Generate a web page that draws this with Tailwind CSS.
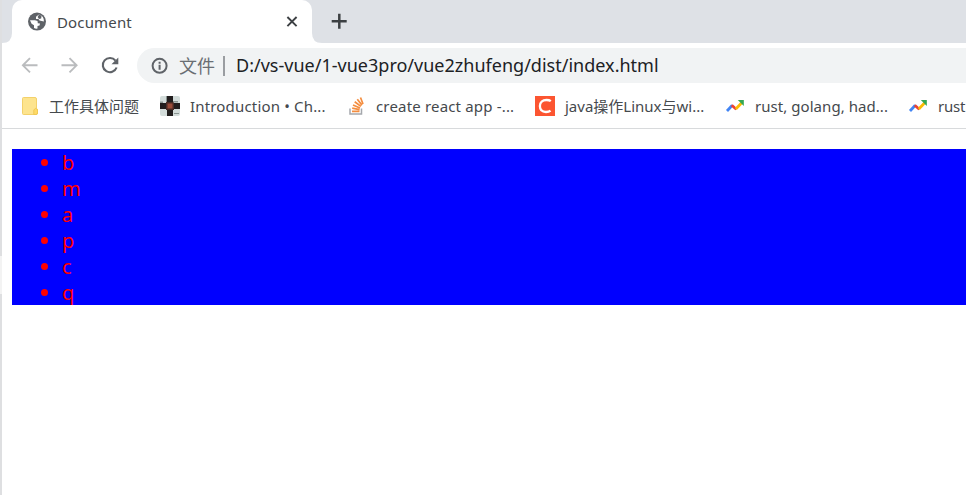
<!DOCTYPE html>
<html lang="zh">
<head>
<meta charset="utf-8">
<title>Document</title>
<script src="https://cdn.jsdelivr.net/npm/@tailwindcss/browser@4"></script>
</head>
<body class="w-[966px] h-[495px] overflow-hidden bg-white flex font-['Noto_Sans','Noto_Sans_CJK_SC',sans-serif]">
<div class="w-[2px] shrink-0 h-full flex flex-col bg-[#dedfe1]"><div class="mt-[256px] h-[38px] bg-[#f3f3f3]"></div></div>
<div class="w-[964px] shrink-0 h-full flex flex-col">
  <header class="h-[43px] bg-[#dee1e6] flex shrink-0">
    <svg class="w-[10px] h-[43px] shrink-0" viewBox="0 0 10 43"><path d="M0 43Q10 43 10 33V43Z" fill="#fff"/></svg>
    <div class="w-[300px] h-[43px] shrink-0 bg-white rounded-t-[10px] flex items-center pl-[15px] pr-[14px]">
      <svg class="w-5 h-5 shrink-0" viewBox="0 0 20 20"><circle cx="10" cy="9.6" r="9" fill="#5f6368"/><path d="M12 2.6L9 4.8V7H11.5L12.5 8.6L16.9 9.6A7 7 0 0 0 12 2.6Z" fill="#fff"/><path d="M3 8.2H8L10.5 9L10.8 11.3L13 11.5L12.5 13.5L10.5 14V16.6Q8.5 17 7 15.9V13.2L4.6 11.8Z" fill="#fff"/><path d="M12 2.6L14.5 3.8L14.2 6.4L12 7L10.6 5Z" fill="#5f6368"/></svg>
      <span class="ml-[10px] text-[15px] leading-5 text-[#45494d] tracking-[0.15px]">Document</span>
      <svg class="ml-auto w-3 h-3" viewBox="0 0 12 12" fill="none" stroke="#3c4043" stroke-width="1.9"><path d="M1.4 1L10.6 10.2M10.6 1L1.4 10.2"/></svg>
    </div>
    <svg class="w-[10px] h-[43px] shrink-0" viewBox="0 0 10 43"><path d="M10 43Q0 43 0 33V43Z" fill="#fff"/></svg>
    <svg class="ml-[9px] mt-[13px] w-4 h-4" viewBox="0 0 16 16" fill="none" stroke="#3c4043" stroke-width="2.5"><path d="M.7 8.3H15.7M8.3 .8V15.8"/></svg>
  </header>
  <nav class="h-[45px] shrink-0 flex items-center">
    <svg class="ml-[18px] w-5 h-5 shrink-0" viewBox="0 0 20 20" fill="none" stroke="#babcbe" stroke-width="1.9"><path d="M17.5 9.3H3M10 2.2L2.9 9.3L10 16.4"/></svg>
    <svg class="ml-5 w-5 h-5 shrink-0" viewBox="0 0 20 20" fill="none" stroke="#babcbe" stroke-width="1.9"><path d="M1.5 9.3H16.5M9.5 2.2L16.6 9.3L9.5 16.4"/></svg>
    <svg class="ml-5 w-5 h-5 shrink-0" viewBox="0 0 20 20"><path d="M15.5 4.7A7.1 7.1 0 1 0 16.6 11.5" fill="none" stroke="#5f6368" stroke-width="2.1"/><path d="M18.3 1.5V8.2H11.5Z" fill="#5f6368"/></svg>
    <div class="ml-[17px] w-[829px] h-[35px] shrink-0 bg-[#f1f3f4] rounded-l-full flex items-center pl-[14px]">
      <svg class="w-[18px] h-[18px] shrink-0" viewBox="0 0 18 18"><circle cx="8.6" cy="8.8" r="7" fill="none" stroke="#5f6368" stroke-width="2"/><path d="M7.6 4.8h2v1.9h-2zM7.6 7.8h2v5h-2z" fill="#5f6368"/></svg>
      <span class="ml-[10px] pb-0.5 text-[18px] leading-6 text-[#6a6e73] font-['Noto_Sans_CJK_SC',sans-serif]">文件</span>
      <div class="ml-[8px] w-[2px] h-5 bg-[#9a9da1]"></div>
      <span class="ml-[11px] pb-0.5 text-[18px] leading-6 text-[#202124] whitespace-nowrap tracking-[0.01px]">D:/vs-vue/1-vue3pro/vue2zhufeng/dist/index.html</span>
    </div>
  </nav>
  <div class="h-[41px] shrink-0 border-b border-[#d8dadc] flex text-[15px] leading-5 text-[#45494d] whitespace-nowrap pt-2">
    <div class="w-[138px] shrink-0 flex pl-[19px]">
      <svg class="w-5 h-5 shrink-0" viewBox="0 0 20 20"><path d="M2.5 1.5H14Q15.5 1.5 15.5 3V12.3L16.5 13.5V17Q16.5 18.5 15 18.5H2.5Q1.5 18.5 1.5 17.5V2.5Q1.5 1.5 2.5 1.5Z" fill="#fde48e" stroke="#f3d16b"/><path d="M12.8 18.5V14L14.5 12.3L16.5 13.5V17Q16.5 18.5 15 18.5Z" fill="#ffda66" stroke="#efc956"/></svg>
      <span class="ml-[8px]">工作具体问题</span>
    </div>
    <div class="w-[187px] shrink-0 flex pl-[20px]">
      <svg class="w-5 h-5 shrink-0" viewBox="0 0 20 20"><rect width="20" height="20" rx="2" fill="#d3dcda"/><path d="M7 0h6v6H7zM0 7h6v6H0zM14 7h6v6h-6zM7 14h6v6H7z" fill="#211d1d"/><path d="M6 6h8v8H6z" fill="#4a2b25"/><path d="M7.5 7.5h5v5h-5z" fill="#984b38"/><path d="M0 5.5h3v1.5H0zM6 0h1v6H6zM13 5h5v1.5h-5zM14 17h5v1h-5z" fill="#899592"/></svg>
      <span class="ml-[10px] tracking-[0.17px]">Introduction • Ch...</span>
    </div>
    <div class="w-[187px] shrink-0 flex pl-[20px]">
      <svg class="w-5 h-5 shrink-0" viewBox="0 0 20 20" fill="none"><path d="M3 12.5V18H14.5V12.5" stroke="#a5a8ad" stroke-width="1.5"/><path d="M5 15.3H12.5M5.2 12.2L12.6 13.6M6 9L13 12M7.7 5.7L13.9 10.4M10.3 3.2L15 9.1M13.5 1.5L16 8" stroke="#f48d3f" stroke-width="1.7"/></svg>
      <span class="ml-[9px] tracking-[0.17px]">create react app -...</span>
    </div>
    <div class="w-[191px] shrink-0 flex pl-[21px]">
      <svg class="w-5 h-5 shrink-0" viewBox="0 0 20 20"><path d="M0 0h20v20H0z" fill="#fc5531"/><path d="M15.8 5.2Q14.3 4 11.5 4C7.5 4 4.9 6.4 4.9 10.1C4.9 13.8 7.2 16 11 16Q14 16 15.5 14.7" fill="none" stroke="#fff" stroke-width="2.3"/></svg>
      <span class="ml-[10px]">java操作Linux与wi...</span>
    </div>
    <div class="w-[183px] shrink-0 flex pl-[20px]">
      <svg class="w-5 h-5 shrink-0" viewBox="0 0 20 20" fill="none" stroke-width="2.8"><path d="M2 15L7.3 9.2" stroke="#4285f4"/><path d="M6.7 9.2L11.3 13.2" stroke="#ea4335"/><path d="M10.8 13L17 6.5" stroke="#fbbc04"/><path d="M12.8 4h6v6z" fill="#34a853"/></svg>
      <span class="ml-[10px] tracking-[0.05px]">rust, golang, had...</span>
    </div>
    <div class="shrink-0 flex pl-[20px]">
      <svg class="w-5 h-5 shrink-0" viewBox="0 0 20 20" fill="none" stroke-width="2.8"><path d="M2 15L7.3 9.2" stroke="#4285f4"/><path d="M6.7 9.2L11.3 13.2" stroke="#ea4335"/><path d="M10.8 13L17 6.5" stroke="#fbbc04"/><path d="M12.8 4h6v6z" fill="#34a853"/></svg>
      <span class="ml-[10px] tracking-[-0.2px]">rust</span>
    </div>
  </div>
  <main class="pt-5 pl-[10px]">
    <ul class="bg-[#0000ff] text-[#ff0000] text-[20px] leading-[26px] pl-[29px]">
      <li class="flex items-center gap-[14px] h-[26px]"><i class="w-[7px] h-[7px] rounded-full bg-[#ff0000]"></i><span class="pt-0.5">b</span></li>
      <li class="flex items-center gap-[14px] h-[26px]"><i class="w-[7px] h-[7px] rounded-full bg-[#ff0000]"></i><span class="pt-0.5">m</span></li>
      <li class="flex items-center gap-[14px] h-[26px]"><i class="w-[7px] h-[7px] rounded-full bg-[#ff0000]"></i><span class="pt-0.5">a</span></li>
      <li class="flex items-center gap-[14px] h-[26px]"><i class="w-[7px] h-[7px] rounded-full bg-[#ff0000]"></i><span class="pt-0.5">p</span></li>
      <li class="flex items-center gap-[14px] h-[26px]"><i class="w-[7px] h-[7px] rounded-full bg-[#ff0000]"></i><span class="pt-0.5">c</span></li>
      <li class="flex items-center gap-[14px] h-[26px]"><i class="w-[7px] h-[7px] rounded-full bg-[#ff0000]"></i><span class="pt-0.5">q</span></li>
    </ul>
  </main>
</div>
</body>
</html>
